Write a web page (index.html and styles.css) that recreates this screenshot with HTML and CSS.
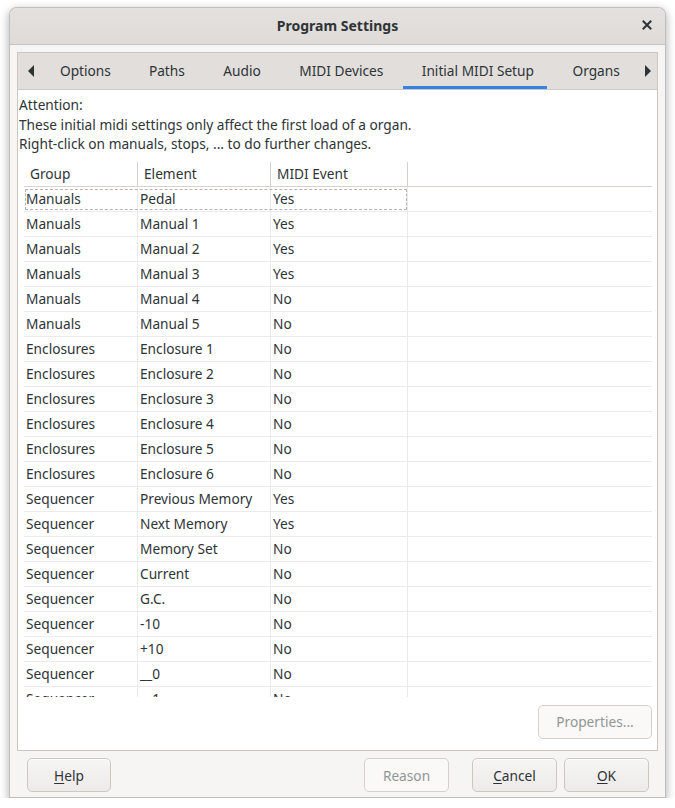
FILE: index.html
```html
<!DOCTYPE html>
<html>
<head>
<meta charset="utf-8">
<link rel="stylesheet" href="styles.css">
</head>
<body>
<div class="window">
  <div class="titlebar">
    <span class="title">Program Settings</span>
    <svg class="close" width="10" height="10" viewBox="0 0 10 10"><path d="M1.5 1.5 L8.5 8.5 M8.5 1.5 L1.5 8.5" stroke="#2e3436" stroke-width="2" stroke-linecap="square"/></svg>
  </div>
  <div class="body">
    <div class="notebook">
      <div class="tabbar">
        <div class="arrow left"><svg width="6" height="12" viewBox="0 0 6 12"><path d="M6 0 L0 6 L6 12 Z" fill="#2e3436"/></svg></div>
        <div class="tabs">
          <div class="tab">Options</div>
          <div class="tab">Paths</div>
          <div class="tab">Audio</div>
          <div class="tab">MIDI Devices</div>
          <div class="tab active">Initial MIDI Setup</div>
          <div class="tab">Organs</div>
        </div>
        <div class="arrow right"><svg width="6" height="12" viewBox="0 0 6 12"><path d="M0 0 L6 6 L0 12 Z" fill="#2e3436"/></svg></div>
      </div>
      <div class="page">
        <div class="note">
          <div>Attention:</div>
          <div>These initial midi settings only affect the first load of a organ.</div>
          <div>Right-click on manuals, stops, ... to do further changes.</div>
        </div>
        <div class="table">
          <div class="thead">
            <div class="th">Group</div>
            <div class="th">Element</div>
            <div class="th">MIDI Event</div>
            <div class="th last"></div>
          </div>
          <div class="tbody">
            <div class="tr focus"><div class="td">Manuals</div><div class="td">Pedal</div><div class="td">Yes</div><div class="td last"></div></div>
            <div class="tr"><div class="td">Manuals</div><div class="td">Manual 1</div><div class="td">Yes</div><div class="td last"></div></div>
            <div class="tr"><div class="td">Manuals</div><div class="td">Manual 2</div><div class="td">Yes</div><div class="td last"></div></div>
            <div class="tr"><div class="td">Manuals</div><div class="td">Manual 3</div><div class="td">Yes</div><div class="td last"></div></div>
            <div class="tr"><div class="td">Manuals</div><div class="td">Manual 4</div><div class="td">No</div><div class="td last"></div></div>
            <div class="tr"><div class="td">Manuals</div><div class="td">Manual 5</div><div class="td">No</div><div class="td last"></div></div>
            <div class="tr"><div class="td">Enclosures</div><div class="td">Enclosure 1</div><div class="td">No</div><div class="td last"></div></div>
            <div class="tr"><div class="td">Enclosures</div><div class="td">Enclosure 2</div><div class="td">No</div><div class="td last"></div></div>
            <div class="tr"><div class="td">Enclosures</div><div class="td">Enclosure 3</div><div class="td">No</div><div class="td last"></div></div>
            <div class="tr"><div class="td">Enclosures</div><div class="td">Enclosure 4</div><div class="td">No</div><div class="td last"></div></div>
            <div class="tr"><div class="td">Enclosures</div><div class="td">Enclosure 5</div><div class="td">No</div><div class="td last"></div></div>
            <div class="tr"><div class="td">Enclosures</div><div class="td">Enclosure 6</div><div class="td">No</div><div class="td last"></div></div>
            <div class="tr"><div class="td">Sequencer</div><div class="td">Previous Memory</div><div class="td">Yes</div><div class="td last"></div></div>
            <div class="tr"><div class="td">Sequencer</div><div class="td">Next Memory</div><div class="td">Yes</div><div class="td last"></div></div>
            <div class="tr"><div class="td">Sequencer</div><div class="td">Memory Set</div><div class="td">No</div><div class="td last"></div></div>
            <div class="tr"><div class="td">Sequencer</div><div class="td">Current</div><div class="td">No</div><div class="td last"></div></div>
            <div class="tr"><div class="td">Sequencer</div><div class="td">G.C.</div><div class="td">No</div><div class="td last"></div></div>
            <div class="tr"><div class="td">Sequencer</div><div class="td">-10</div><div class="td">No</div><div class="td last"></div></div>
            <div class="tr"><div class="td">Sequencer</div><div class="td">+10</div><div class="td">No</div><div class="td last"></div></div>
            <div class="tr"><div class="td">Sequencer</div><div class="td">__0</div><div class="td">No</div><div class="td last"></div></div>
            <div class="tr"><div class="td">Sequencer</div><div class="td">__1</div><div class="td">No</div><div class="td last"></div></div>
          </div>
        </div>
        <div class="page-actions">
          <button class="btn disabled props">Properties...</button>
        </div>
      </div>
    </div>
    <div class="actions">
      <button class="btn help"><u>H</u>elp</button>
      <div class="spacer"></div>
      <button class="btn disabled">Reason</button>
      <button class="btn cancel"><u>C</u>ancel</button>
      <button class="btn ok"><u>O</u>K</button>
    </div>
  </div>
</div>
</body>
</html>
```
FILE: styles.css
```css
html, body {
  margin: 0;
  padding: 0;
  background: #ffffff;
}
body {
  font-family: "Noto Sans", "DejaVu Sans", sans-serif;
  font-size: 13.7px;
  color: #2e3436;
}
.window {
  box-sizing: border-box;
  margin: 7px 0 0 9px;
  width: 657px;
  height: 791px;
  border: 1px solid rgba(0,0,0,0.22);
  border-radius: 8px 8px 0 0;
  background: #f6f5f4;
  box-shadow: 0 3px 9px 1px rgba(0,0,0,0.28);
  display: flex;
  flex-direction: column;
  overflow: hidden;
}
.titlebar {
  height: 36px;
  flex: none;
  border-bottom: 1px solid #c6c2be;
  background: linear-gradient(#e3e0dd, #dedbd8);
  display: flex;
  align-items: center;
  justify-content: center;
  position: relative;
}
.title {
  font-weight: bold;
  font-size: 14px;
  margin-top: -1px;
}
.close {
  position: absolute;
  right: 13px;
  top: 12px;
}
.body {
  flex: 1;
  display: flex;
  flex-direction: column;
  padding: 7px 7px 5px 7px;
}
.notebook {
  box-sizing: border-box;
  height: 699px;
  border: 1px solid #cdc7c2;
  display: flex;
  flex-direction: column;
}
.tabbar {
  height: 36px;
  flex: none;
  background: #e1dedb;
  border-bottom: 1px solid #cdc7c2;
  display: flex;
  align-items: stretch;
}
.arrow {
  display: flex;
  align-items: center;
  flex: none;
  box-sizing: border-box;
}
.arrow.left { width: 23px; padding-left: 10px; }
.arrow.right { width: 16px; padding-left: 4px; }
.tabs {
  flex: 1;
  display: flex;
  overflow: hidden;
}
.tab {
  padding: 0 19px 2px 19px;
  display: flex;
  align-items: center;
  white-space: nowrap;
  position: relative;
}
.tab:nth-child(n+3) { padding-left: 19.5px; }
.tab.active::after {
  content: "";
  position: absolute;
  left: 1px;
  right: 6px;
  bottom: 0;
  height: 3px;
  background: #3584e4;
}
.page {
  flex: 1;
  background: #ffffff;
  display: flex;
  flex-direction: column;
  padding: 5px 5px 0 1px;
}
.note {
  line-height: 19.5px;
}
.table {
  margin: 8px 0 0 5px;
  height: 535px;
  overflow: hidden;
}
.thead {
  display: grid;
  grid-template-columns: 114px 133px 137px 1fr;
  height: 24px;
  border-bottom: 1px solid #d6d1cd;
}
.th {
  padding-left: 6px;
  line-height: 24px;
  border-right: 1px solid #d6d1cd;
}
.th.last { border-right: none; }
.tr {
  display: grid;
  grid-template-columns: 114px 133px 137px 1fr;
  height: 24px;
  border-bottom: 1px solid #ebebeb;
  position: relative;
}
.td {
  padding-left: 2px;
  line-height: 24px;
  border-right: 1px solid #ebebeb;
  white-space: nowrap;
}
.td.last { border-right: none; }
.tr.focus::after {
  content: "";
  position: absolute;
  left: 1px;
  top: 2px;
  width: 380px;
  height: 19px;
  border: 1px dashed #b4b4b4;
}
.page-actions {
  display: flex;
  justify-content: flex-end;
  margin-top: 8px;
}
.btn {
  font-family: "Noto Sans", "DejaVu Sans", sans-serif;
  font-size: 13.7px;
  color: #2e3436;
  height: 34px;
  width: 85px;
  border: 1px solid #cdc7c2;
  border-radius: 5px;
  background: linear-gradient(#f6f5f4, #edebe9);
  box-shadow: inset 0 1px #ffffff;
  padding: 0;
}
.btn.disabled {
  color: #929595;
  background: #faf9f8;
  border-color: #d5d0cc;
  box-shadow: none;
}
.btn.props {
  width: 114px;
}
.actions {
  display: flex;
  margin-top: 7px;
  padding: 0 9px 0 10px;
  gap: 7px;
}
.actions .help { width: 84px; }
.spacer { flex: 1; }
.actions .cancel { margin-left: 16px; }
u { text-decoration-thickness: 1px; text-underline-offset: 2px; }
```
